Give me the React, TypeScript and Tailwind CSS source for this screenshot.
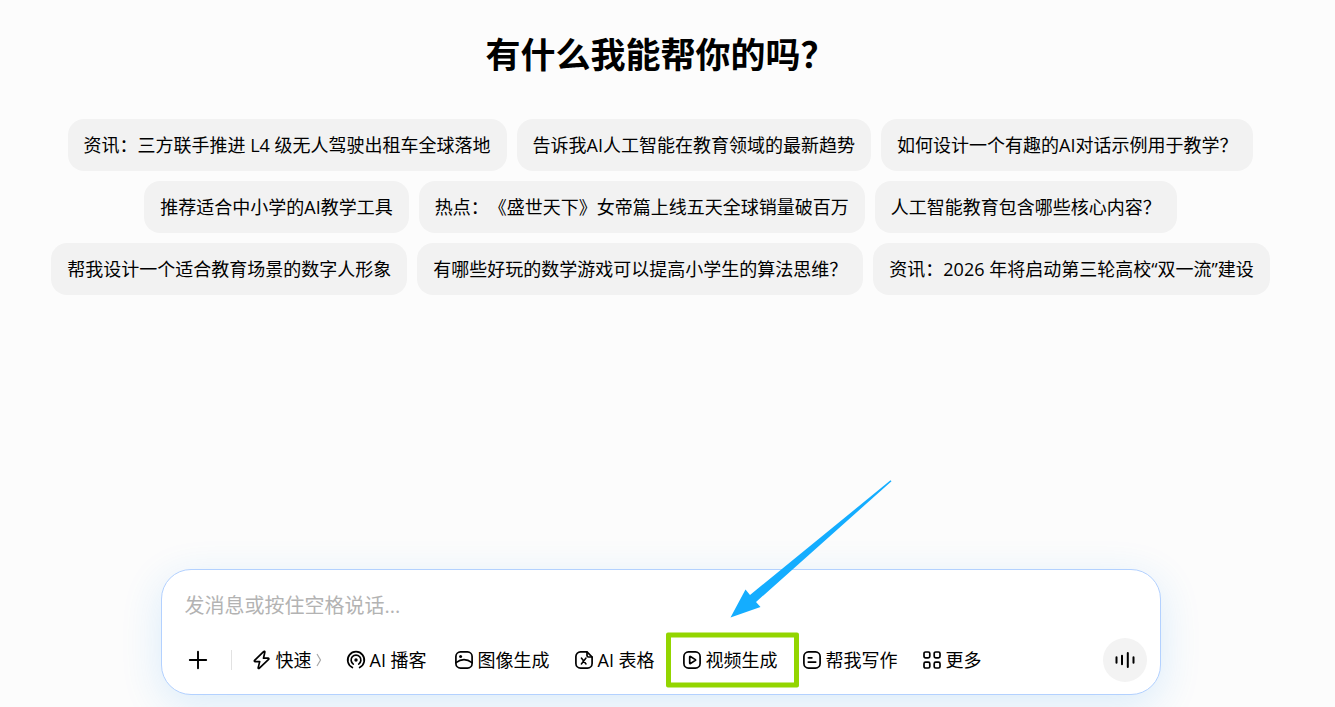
import React from "react";

const suggestions: string[] = [
  "资讯：三方联手推进 L4 级无人驾驶出租车全球落地",
  "告诉我AI人工智能在教育领域的最新趋势",
  "如何设计一个有趣的AI对话示例用于教学？",
  "推荐适合中小学的AI教学工具",
  "热点：《盛世天下》女帝篇上线五天全球销量破百万",
  "人工智能教育包含哪些核心内容？",
  "帮我设计一个适合教育场景的数字人形象",
  "有哪些好玩的数学游戏可以提高小学生的算法思维？",
  "资讯：2026 年将启动第三轮高校“双一流”建设",
];

function Icon({ children }: { children: React.ReactNode }) {
  return (
    <svg
      viewBox="0 0 20 20"
      className="size-5 shrink-0"
      fill="none"
      stroke="currentColor"
      strokeWidth="1.7"
      strokeLinecap="round"
      strokeLinejoin="round"
      aria-hidden="true"
    >
      {children}
    </svg>
  );
}

const PlusIcon = () => (
  <Icon>
    <path d="M10 1.8v16.4M1.8 10h16.4" strokeWidth="1.9" />
  </Icon>
);

const BoltIcon = () => (
  <Icon>
    <path d="M11.6 1.6 2.6 10.4c-.5.5-.2 1.2.5 1.2h4.6l-1.500 6c-.2.8.6 1.200 1.200.6l9.200-8.800c.5-.5.2-1.200-.5-1.200h-4.600l1.300-6c.2-.8-.6-1.200-1.200-.6Z" />
  </Icon>
);

const PodcastIcon = () => (
  <Icon>
    <path d="M6.400 17.500a8.300 8.300 0 1 1 7.200 0" />
    <path d="M7.300 14.100a4.900 4.900 0 1 1 5.400 0" />
    <circle cx="10" cy="10" r="1.700" fill="currentColor" stroke="none" />
  </Icon>
);

const ImageIcon = () => (
  <Icon>
    <rect x="1.9" y="1.9" width="16.2" height="16.2" rx="4.6" />
    <circle cx="6.6" cy="6.6" r="1.5" fill="currentColor" stroke="none" />
    <path d="M2 12.600c5-3.600 11-3.600 16 0" />
  </Icon>
);

const TableIcon = () => (
  <Icon>
    <path d="M13 1.900H6.500a4.600 4.600 0 0 0-4.600 4.600v7a4.600 4.600 0 0 0 4.600 4.600h7a4.600 4.600 0 0 0 4.600-4.600V7Z" />
    <path d="M13 2v3.500c0 .8.7 1.500 1.500 1.500H18" />
    <path d="m7.400 8 4.600 6M12 8l-4.600 6" strokeWidth="1.500" />
  </Icon>
);

const VideoIcon = () => (
  <Icon>
    <rect x="1.9" y="1.9" width="16.2" height="16.2" rx="4.6" />
    <path d="M7.700 6.900v6.200c0 .4.4.6.7.4l5-3.100c.3-.2.3-.6 0-.8l-5-3.100c-.3-.2-.7 0-.7.4Z" />
  </Icon>
);

const WriteIcon = () => (
  <Icon>
    <rect x="1.9" y="1.9" width="16.2" height="16.2" rx="4.6" />
    <path d="M6.300 7.800h3.600M6.300 12.100h7.400" />
  </Icon>
);

const MoreIcon = () => (
  <Icon>
    <rect x="2" y="2" width="5.800" height="5.800" rx="1.500" />
    <rect x="12.200" y="2" width="5.800" height="5.800" rx="1.500" />
    <rect x="2" y="12.200" width="5.800" height="5.800" rx="1.500" />
    <rect x="12.200" y="12.200" width="5.800" height="5.800" rx="1.500" />
  </Icon>
);

function Tool({
  icon,
  label,
  children,
}: {
  icon: React.ReactNode;
  label: string;
  children?: React.ReactNode;
}) {
  return (
    <button
      type="button"
      className="relative flex min-w-[84px] items-center gap-1 whitespace-nowrap text-lg"
    >
      {icon}
      <span>{label}</span>
      {children}
    </button>
  );
}

function Callout() {
  return (
    <>
      <span className="pointer-events-none absolute -left-4 top-1/2 h-[55px] w-[133px] -translate-y-1/2 rounded-[2px] border-[5px] border-[#93d500]" />
      <svg
        viewBox="0 0 162 138"
        className="pointer-events-none absolute bottom-full left-12 mb-7 h-[138px] w-[162px]"
        fill="#14adff"
        aria-hidden="true"
      >
        <path d="M.5 137.500 15.500 109.500 20 115 160.500.3 161.500 1.300 26 122 30.500 127Z" />
      </svg>
    </>
  );
}

export default function App() {
  return (
    <main className="flex min-h-screen flex-col items-center bg-[#fcfcfc] pr-3.5 pb-3 font-['Open_Sans','Noto_Sans_CJK_SC',sans-serif] text-black [text-spacing-trim:space-all]">
      <h1 className="mt-[31px] text-[35px] leading-[48px] font-bold">有什么我能帮你的吗？</h1>

      <ul className="mt-10 flex max-w-[1260px] flex-wrap justify-center gap-2.5">
        {suggestions.map((text) => (
          <li key={text}>
            <button
              type="button"
              className="h-[52px] rounded-2xl bg-[#f2f2f2] px-4 text-lg whitespace-nowrap"
            >
              {text}
            </button>
          </li>
        ))}
      </ul>

      <form
        className="mt-auto flex w-full max-w-[1000px] flex-col gap-[18px] rounded-[30px] border border-[#b3d1ff] bg-white pt-5 pr-[13px] pb-3 pl-[23px] shadow-[0_10px_40px_rgba(40,150,240,0.16)]"
        onSubmit={(event) => event.preventDefault()}
      >
        <input
          type="text"
          aria-label="发消息"
          placeholder="发消息或按住空格说话..."
          className="h-[30px] w-full bg-transparent text-xl outline-none placeholder:text-[#b3b3b3]"
        />
        <div className="flex h-11 items-center">
          <button type="button" aria-label="添加" className="ml-[3px]">
            <PlusIcon />
          </button>
          <span className="mr-5 ml-[23px] h-5 w-px bg-[#e2e2e2]" />
          <div className="flex items-center gap-6">
            <button type="button" className="flex items-center gap-1 text-lg whitespace-nowrap">
              <BoltIcon />
              <span>快速</span>
              <svg
                viewBox="0 0 6 16"
                className="h-4 w-1.5"
                fill="none"
                stroke="#a8a8a8"
                strokeWidth="1.2"
                aria-hidden="true"
              >
                <path d="M1 2 4.500 8 1 14" />
              </svg>
            </button>
            <Tool icon={<PodcastIcon />} label="AI 播客" />
            <Tool icon={<ImageIcon />} label="图像生成" />
            <Tool icon={<TableIcon />} label="AI 表格" />
            <Tool icon={<VideoIcon />} label="视频生成">
              <Callout />
            </Tool>
            <Tool icon={<WriteIcon />} label="帮我写作" />
            <Tool icon={<MoreIcon />} label="更多" />
          </div>
          <button
            type="button"
            aria-label="语音输入"
            className="ml-auto flex size-11 items-center justify-center rounded-full bg-[#f3f3f3]"
          >
            <svg
              viewBox="0 0 20 20"
              className="size-5"
              fill="none"
              stroke="currentColor"
              strokeWidth="2"
              strokeLinecap="round"
              aria-hidden="true"
            >
              <path d="M1.500 7.200v5.600M7 5.800v8.400M12.800 3v14M18.500 7.200v5.600" />
            </svg>
          </button>
        </div>
      </form>
    </main>
  );
}
